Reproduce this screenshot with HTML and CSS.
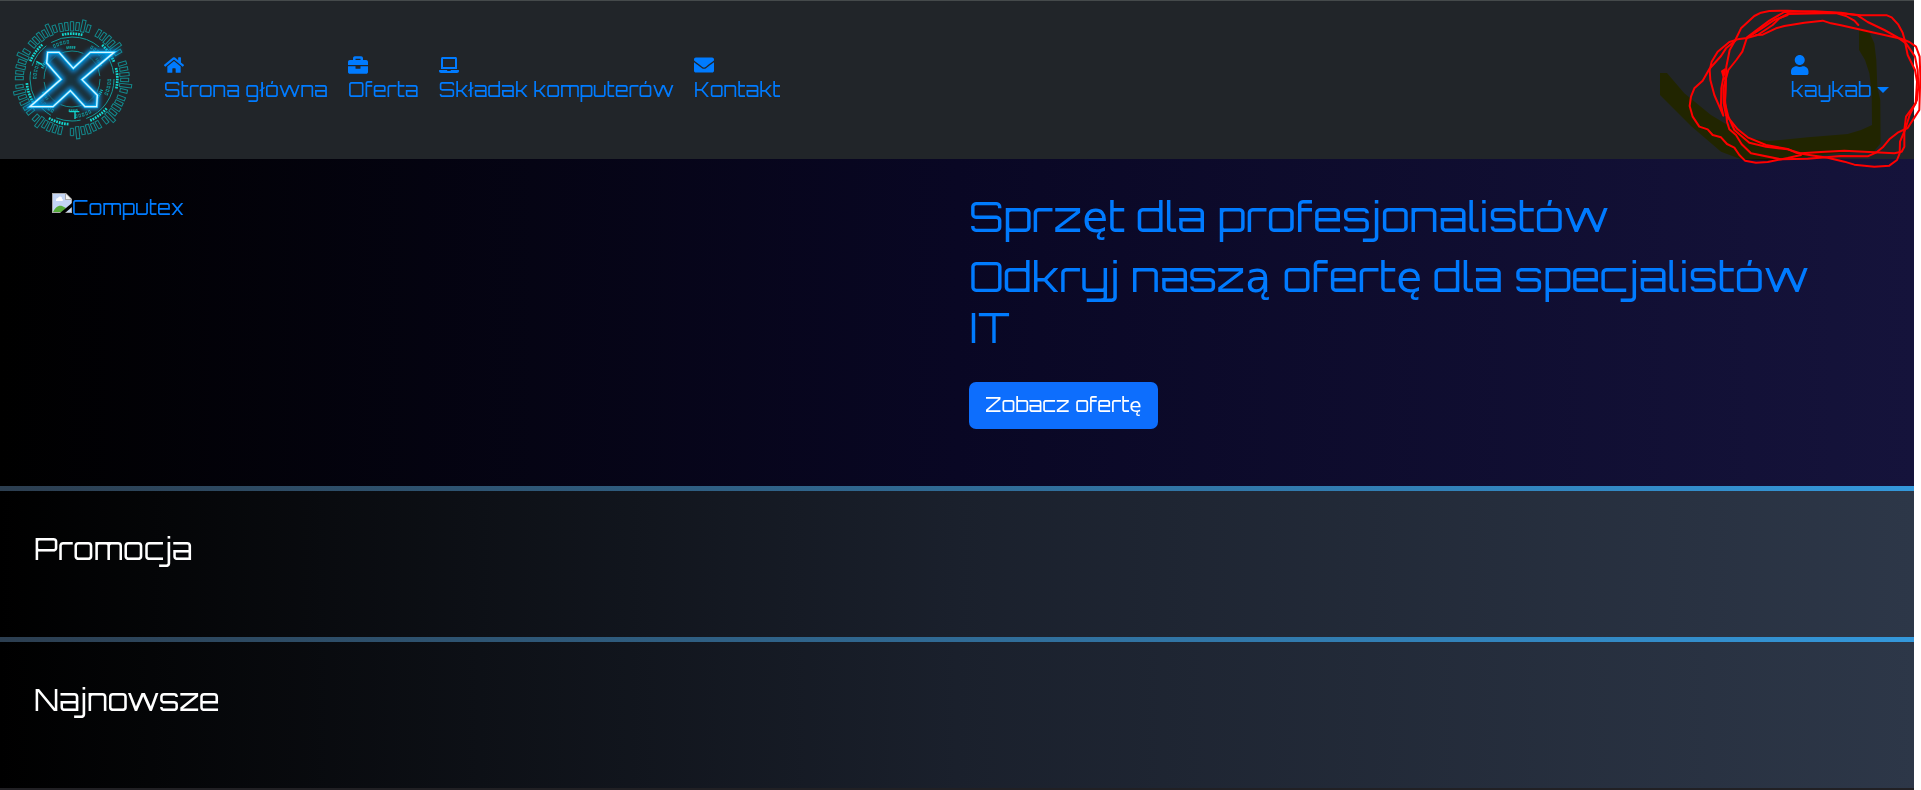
FILE: index.html
```html
<!DOCTYPE html>
<html lang="pl">
<head>
<meta charset="utf-8">
<title>Computex</title>
<link rel="stylesheet" href="styles.css">
</head>
<body>
<header class="navbar">
  <a class="brand" href="#" aria-label="Computex">
    <svg class="logo" viewBox="26 51 378 378" aria-hidden="true">
      <defs>
        <g id="cluster">
          <path d="M-5-146h10v-24h-10z" transform="rotate(-15)"/>
          <path d="M-5-146h10v-24h-10z" transform="rotate(-9)"/>
          <path d="M-5-144h10v-28h-10z" transform="rotate(-3)"/>
          <path d="M-5-146h10v-24h-10z" transform="rotate(3)"/>
          <path d="M-5-144h10v-36h-10z" transform="rotate(9)"/>
          <path d="M-5-148h10v-22h-10z" transform="rotate(15)"/>
        </g>
        <filter id="glow" x="-20%" y="-20%" width="140%" height="140%"><feGaussianBlur stdDeviation="7"/></filter>
      </defs>
      <g transform="translate(215 237)" fill="none">
        <g stroke="#138a8e" stroke-width="3">
          <use href="#cluster" transform="rotate(3)"/>
          <use href="#cluster" transform="rotate(45)"/>
          <use href="#cluster" transform="rotate(88)"/>
          <use href="#cluster" transform="rotate(126)"/>
          <use href="#cluster" transform="rotate(165)"/>
          <use href="#cluster" transform="rotate(208)"/>
          <use href="#cluster" transform="rotate(247)"/>
          <use href="#cluster" transform="rotate(286)"/>
          <use href="#cluster" transform="rotate(326)"/>
        </g>
        <circle r="136" stroke="#12d8d0" stroke-width="8" pathLength="360" stroke-dasharray="2.2 1.2 2.2 1.2 2.2 1.2 2.2 1.2 2.2 1.2 2.2 1.2 2.2 1.2 2.2 28.2" transform="rotate(-14)"/>
        <circle r="126" stroke="#129a9a" stroke-width="3" pathLength="360" stroke-dasharray="70 8 34 8"/>
        <circle r="112" stroke="#138a8e" stroke-width="11" pathLength="360" stroke-dasharray="3.6 1.8 3.6 1.8 3.6 1.8 3.6 1.8 3.6 34.8"/>
        <circle r="112" stroke="#212529" stroke-width="5" pathLength="360" stroke-dasharray="1.6 3.8 1.6 3.8 1.6 3.8 1.6 3.8 1.6 36.8" stroke-dashoffset="-1"/>
        <circle r="95" stroke="#12bdb9" stroke-width="8" pathLength="360" stroke-dasharray="2 1.5 2 1.5 2 1.5 2 1.5 2 44" transform="rotate(-100)"/>
        <circle r="84" stroke="#138a8e" stroke-width="3" pathLength="360" stroke-dasharray="54 6"/>
        <path d="M9 120V99M-8 98h30M-107-53l18 10" stroke="#12d8d0" stroke-width="4"/>
      </g>
      <path d="M142 157h34l43 48 51-48h71l-96 82 46 47-2 34h-35l-44-48-52 48H89l93-82-43-49z" fill="#123b4c" fill-opacity=".6" stroke="#0097e8" stroke-width="16" filter="url(#glow)"/>
      <path d="M142 157h34l43 48 51-48h71l-96 82 46 47-2 34h-35l-44-48-52 48H89l93-82-43-49z" fill="none" stroke="#16b4f5" stroke-width="8"/>
      <path d="M142 157h34l43 48 51-48h71l-96 82 46 47-2 34h-35l-44-48-52 48H89l93-82-43-49z" fill="none" stroke="#d5f6ff" stroke-width="4"/>
    </svg>
  </a>
  <nav class="menu">
    <a class="item" href="#">
      <svg class="icon" viewBox="0 0 576 512" aria-hidden="true"><path d="M280.37 148.26L96 300.11V464a16 16 0 0 0 16 16l112.06-.29a16 16 0 0 0 15.92-16V368a16 16 0 0 1 16-16h64a16 16 0 0 1 16 16v95.64a16 16 0 0 0 16 16.05L464 480a16 16 0 0 0 16-16V300L295.67 148.26a12.19 12.19 0 0 0-15.3 0zM571.6 251.47L488 182.56V44.05a12 12 0 0 0-12-12h-56a12 12 0 0 0-12 12v72.61L318.47 43a48 48 0 0 0-61 0L4.34 251.47a12 12 0 0 0-1.6 16.9l25.5 31A12 12 0 0 0 45.15 301l235.22-193.74a12.19 12.19 0 0 1 15.3 0L530.9 301a12 12 0 0 0 16.9-1.6l25.5-31a12 12 0 0 0-1.7-16.93z"/></svg>
      <span>Strona główna</span>
    </a>
    <a class="item" href="#">
      <svg class="icon" viewBox="0 0 512 512" aria-hidden="true"><path d="M320 336c0 8.84-7.16 16-16 16h-96c-8.84 0-16-7.16-16-16v-48H0v144c0 25.6 22.4 48 48 48h416c25.6 0 48-22.4 48-48V288H320v48zm144-208h-80V80c0-25.6-22.4-48-48-48H176c-25.6 0-48 22.4-48 48v48H48c-25.6 0-48 22.4-48 48v80h512v-80c0-25.6-22.4-48-48-48zm-144 0H192V96h128v32z"/></svg>
      <span>Oferta</span>
    </a>
    <a class="item" href="#">
      <svg class="icon" viewBox="0 0 640 512" aria-hidden="true"><path d="M624 416H381.54c-.74 19.81-14.71 32-32.74 32H288c-18.69 0-33.02-17.47-32.77-32H16c-8.8 0-16 7.2-16 16v16c0 35.2 28.8 64 64 64h512c35.2 0 64-28.8 64-64v-16c0-8.8-7.2-16-16-16zM576 48c0-26.4-21.6-48-48-48H112C85.6 0 64 21.6 64 48v336h512V48zm-64 272H128V64h384v256z"/></svg>
      <span>Składak komputerów</span>
    </a>
    <a class="item" href="#">
      <svg class="icon" viewBox="0 0 512 512" aria-hidden="true"><path d="M502.3 190.8c3.9-3.1 9.7-.2 9.7 4.7V400c0 26.5-21.5 48-48 48H48c-26.5 0-48-21.5-48-48V195.6c0-5 5.7-7.8 9.7-4.7 22.4 17.4 52.1 39.5 154.1 113.6 21.1 15.4 56.7 47.8 92.2 47.6 35.7.3 72-32.8 92.3-47.6 102-74.1 131.6-96.3 154-113.7zM256 320c23.2.4 56.6-29.2 73.4-41.4 132.7-96.3 142.8-104.7 173.4-128.7 5.8-4.5 9.2-11.5 9.2-18.9v-19c0-26.5-21.5-48-48-48H48c-26.5 0-48 21.5-48 48v19c0 7.4 3.4 14.3 9.2 18.9 30.6 23.9 40.7 32.4 173.4 128.7 16.8 12.2 50.2 41.8 73.4 41.4z"/></svg>
      <span>Kontakt</span>
    </a>
  </nav>
  <button class="item user" type="button">
    <svg class="icon" viewBox="0 0 448 512" preserveAspectRatio="xMinYMid" aria-hidden="true"><path d="M224 256c70.7 0 128-57.3 128-128S294.7 0 224 0 96 57.3 96 128s57.3 128 128 128zm89.6 32h-16.7c-22.2 10.2-46.9 16-72.9 16s-50.6-5.8-72.9-16h-16.7C60.2 288 0 348.2 0 422.4V464c0 26.5 21.5 48 48 48h352c26.5 0 48-21.5 48-48v-41.6c0-74.2-60.2-134.4-134.4-134.4z"/></svg>
    <span class="name">kaykab</span>
  </button>
</header>
<main>
  <section class="hero">
    <a class="picture" href="#">
      <svg class="broken" viewBox="0 0 20 20" aria-hidden="true">
        <path d="M0 0h14l6 6v14H0z" fill="#a9a9a9"/>
        <path d="M1 1h12v6h6v12H1z" fill="#c3d5f5"/>
        <path d="M4 7a2 2 0 0 1 2-2 2 2 0 0 1 4 1 1 1 0 0 1 0 2H4z" fill="#fff"/>
        <path d="M1 19c2-4 5-7 9-6l4 2-3 4z" fill="#55ab3a"/>
        <path d="M14 1v5h5z" fill="#f4f4f4"/>
        <path d="M8 20L20 10v4l-7 6z" fill="#000"/>
      </svg>
      <span>Computex</span>
    </a>
    <div class="pitch">
      <h1>Sprzęt dla profesjonalistów</h1>
      <h1>Odkryj naszą ofertę dla specjalistów IT</h1>
      <button class="cta" type="button">Zobacz ofertę</button>
    </div>
  </section>
  <section class="band"><h2>Promocja</h2></section>
  <section class="band"><h2>Najnowsze</h2></section>
</main>
<svg class="ink marker" viewBox="0 0 840 540" aria-hidden="true">
  <path d="M654 90H682L700 130L706 180L709 260L718 300L719 430L700 453L600 458L520 468L400 482L300 478L240 455L205 425L150 378L57 285V219H78L130 280L210 345L285 390L325 415L385 423L500 412L620 402L660 390L693 375L692 280L685 220L672 180L654 150Z" fill="#ff0"/>
</svg>
<svg class="ink" viewBox="0 0 840 540" aria-hidden="true">
  <g fill="none" stroke="#f00" stroke-width="6" stroke-linecap="round" stroke-linejoin="round">
    <path d="M652 75L640 62L615 48L585 39L440 42L415 55L395 75L350 105L318 114L290 118L265 126L230 155L212 185L206 210L208 240L220 285L247 347L240 315L241 265L252 208L243 214L248 232L254 240L252 300L258 365L265 388L285 405L302 433L330 460L420 478L500 476L600 468L680 469L705 458L727 440L745 418L770 398L800 384L822 350L835 330L838 230L836 170L825 140L805 126L780 116L700 98L600 76L570 70L545 62L490 68L430 78L405 85L365 104L345 105"/>
    <path d="M283 120L300 85L340 48L360 38L385 33L440 32L590 39L660 46L738 46L752 52L772 74L785 98L791 120L800 165L822 210L828 245L824 310L795 350L790 390L790 440L782 455L760 460L700 457L610 452L540 456L480 460L440 448L375 440L325 428L280 390L262 350L252 310L254 265L256 200L266 150L283 120"/>
    <path d="M318 112L345 92L385 62L430 36L520 34L600 38L650 46L680 66L730 90L770 112L795 130L822 170L830 210L832 260L828 300L806 345L792 390L777 425L776 460L768 480L745 497L700 500L640 494L610 485L560 473L500 464L465 458L440 447L375 435L320 412L290 388L255 345L248 310L247 265L262 210L286 180L304 155L318 112"/>
    <path d="M283 122L255 145L240 168L205 207L185 242L160 265L150 290L146 318L155 350L175 380L200 388L215 405L240 412L258 432L280 443L295 465L312 482L345 488L380 486L440 474L480 465"/>
    <path d="M318 114L370 80L400 60L440 45"/>
  </g>
</svg>
</body>
</html>
```
FILE: styles.css
```css
* {
  box-sizing: border-box;
}

body {
  position: relative;
  display: flex;
  flex-direction: column;
  min-height: 100vh;
  margin: 0;
  padding-right: 7px;
  background: #fff;
  color: #007bff;
  font-family: Orbitron, "DejaVu Sans", sans-serif;
  font-size: 20px;
  line-height: 25px;
}

a {
  color: inherit;
  text-decoration: none;
}

button {
  border: 0;
  font: inherit;
  cursor: pointer;
}

.navbar {
  display: flex;
  align-items: center;
  padding: 16px 25px 16px 9px;
  border-top: 1px solid #454a4b;
  background: #212529;
}

.brand {
  margin-right: 29px;
}

.logo {
  display: block;
  width: 126px;
  height: 126px;
}

.menu {
  display: flex;
  flex: 1;
  gap: 20px;
}

.item {
  display: flex;
  flex-direction: column;
  align-items: flex-start;
  gap: 2px;
  padding: 0 0 3px;
  white-space: nowrap;
}

.icon {
  width: 20px;
  height: 20px;
  fill: currentColor;
}

.user {
  background: none;
  color: inherit;
}

.name {
  display: flex;
  align-items: center;
  gap: 6px;
}

.name::after {
  content: "";
  border: 6px solid transparent;
  border-top-color: currentColor;
  border-bottom: 0;
}

.hero {
  display: grid;
  grid-template-columns: 1fr 1fr;
  padding: 32px 0 57px;
  background: linear-gradient(to right, #000, #090724 50%, #15133b);
}

.picture {
  display: flex;
  align-items: flex-start;
  padding: 2px 0 0 52px;
}

.picture span {
  padding-top: 2px;
}

.broken {
  width: 20px;
  height: 20px;
}

.pitch {
  padding: 0 64px 0 12px;
}

h1,
h2 {
  margin: 0;
  font-weight: 400;
}

h1 {
  margin-bottom: 9px;
  font-size: 42px;
  line-height: 51px;
}

.cta {
  margin-top: 20px;
  padding: 10px 16px 12px;
  border-radius: 7px;
  background: #0d6efd;
  color: #fff;
}

.band {
  min-height: 151px;
  padding: 38px 34px;
  border-top: 5px solid;
  border-image: linear-gradient(to right, #2c3e50, #3498db) 1;
  background: linear-gradient(to right, #000, #1a202c 50%, #2d3748);
  color: #fff;
}

main {
  flex: 1;
  background: #212024;
}

h2 {
  font-size: 30px;
  line-height: 40px;
}

/* Hand-drawn marks over the account menu */
.ink {
  position: absolute;
  top: 0;
  right: 0;
  width: 280px;
  height: 180px;
  pointer-events: none;
}

.marker {
  mix-blend-mode: multiply;
}
```
